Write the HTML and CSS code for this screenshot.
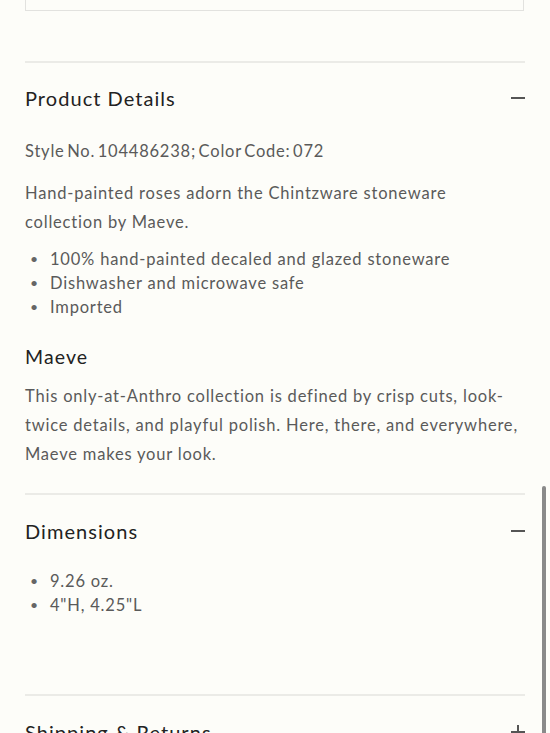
FILE: index.html
```html
<!DOCTYPE html>
<html lang="en">
<head>
<meta charset="utf-8">
<title>Product Details</title>
<link rel="stylesheet" href="styles.css">
</head>
<body>
<div class="page">
  <div class="top-box"></div>

  <section class="acc acc-first">
    <div class="acc-head">
      <h2 class="acc-title">Product Details</h2>
      <span class="icon minus"></span>
    </div>
    <div class="acc-body">
      <p class="style-no">Style No. 104486238; Color Code: 072</p>
      <p class="para">Hand-painted roses adorn the Chintzware stoneware collection by Maeve.</p>
      <ul class="bullets">
        <li>100% hand-painted decaled and glazed stoneware</li>
        <li>Dishwasher and microwave safe</li>
        <li>Imported</li>
      </ul>
      <h3 class="brand">Maeve</h3>
      <p class="para brand-text">This only-at-Anthro collection is defined by crisp cuts, look-twice details, and playful polish. Here, there, and everywhere, Maeve makes your look.</p>
    </div>
  </section>

  <section class="acc">
    <div class="acc-head">
      <h2 class="acc-title">Dimensions</h2>
      <span class="icon minus"></span>
    </div>
    <div class="acc-body dims">
      <ul class="bullets">
        <li>9.26 oz.</li>
        <li>4"H, 4.25"L</li>
      </ul>
    </div>
  </section>

  <section class="acc">
    <div class="acc-head">
      <h2 class="acc-title">Shipping &amp; Returns</h2>
      <span class="icon plus"></span>
    </div>
  </section>
</div>
<div class="scroll-thumb"></div>
</body>
</html>
```

FILE: styles.css
```css
html, body {
  margin: 0;
  padding: 0;
  background: #fdfdf9;
}
body {
  font-family: Lato, "Noto Sans", sans-serif;
  color: #5a5a5a;
  overflow: hidden;
  height: 733px;
}
.page {
  padding: 0 25px;
}
.top-box {
  height: 10px;
  border: 1px solid #e2e2df;
  border-top: none;
  margin-right: 1px;
}
.acc {
  border-top: 2px solid #ebebe7;
}
.acc-first {
  margin-top: 50px;
}
.acc-head {
  height: 72px;
  display: flex;
  align-items: center;
  justify-content: space-between;
}
.acc-title {
  margin: 0;
  font-size: 20px;
  font-weight: 400;
  letter-spacing: 1.05px;
  color: #222;
}
.acc-first .acc-head {
  height: 70px;
}
.icon {
  position: relative;
  width: 14px;
  height: 14px;
  display: block;
}
.icon::before {
  content: "";
  position: absolute;
  left: 0;
  right: 0;
  top: 6px;
  height: 1.5px;
  background: #555;
}
.plus::after {
  content: "";
  position: absolute;
  top: 0;
  bottom: 0;
  left: 6px;
  width: 1.5px;
  background: #555;
}
.acc-body p {
  margin: 0;
}
.style-no {
  margin-top: 4px !important;
  font-size: 16.5px;
  line-height: 29px;
  letter-spacing: 0.8px;
  word-spacing: -2.5px;
}
.para {
  font-size: 16.5px;
  line-height: 29px;
  letter-spacing: 0.8px;
  margin-top: 13px !important;
}
.bullets {
  margin: 10px 0 0;
  padding: 0;
  list-style: none;
  font-size: 16.5px;
  line-height: 24px;
  letter-spacing: 0.8px;
}
.bullets li {
  display: flex;
}
.bullets li::before {
  content: "\2022";
  flex: 0 0 20px;
  padding-left: 5px;
  font-size: 14px;
  color: #666;
}
.brand {
  margin: 23px 0 0;
  font-size: 19.5px;
  font-weight: 400;
  line-height: 29px;
  letter-spacing: 1.1px;
  color: #222;
}
.brand-text {
  margin-top: 11px !important;
  padding-bottom: 24px;
}
.dims {
  padding-bottom: 77px;
}
.dims .bullets {
  margin-top: 2px;
}
.scroll-thumb {
  position: absolute;
  left: 542px;
  top: 486px;
  width: 4px;
  height: 260px;
  border-radius: 2px;
  background: #8a8a8a;
}
```
